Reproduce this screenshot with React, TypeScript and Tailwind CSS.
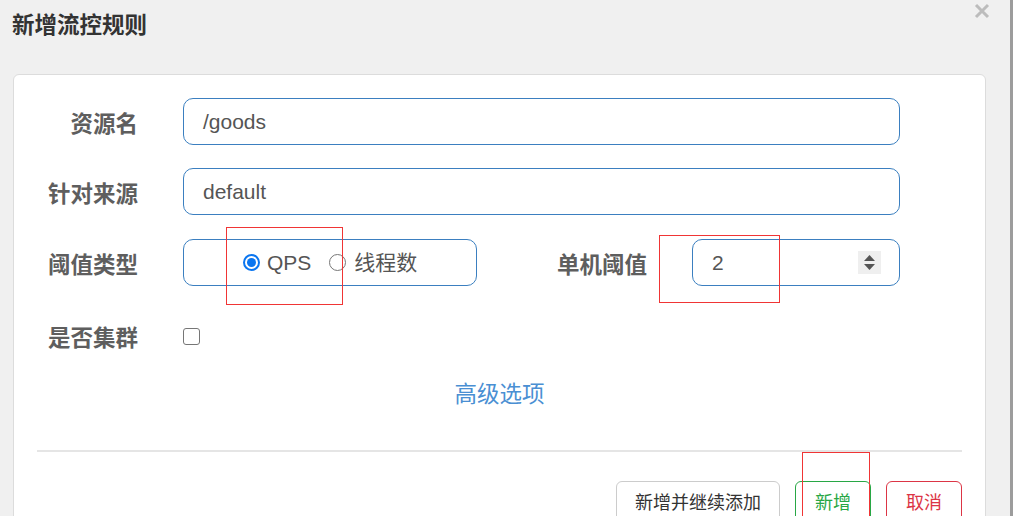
import React from "react";

const font = { fontFamily: '"Liberation Sans", "Noto Sans CJK SC", sans-serif' };

function Radio({ checked, className = "" }: { checked?: boolean; className?: string }) {
  return checked ? (
    <span
      className={`flex h-[17px] w-[17px] shrink-0 items-center justify-center rounded-full border-[2px] border-[#0b76f0] bg-white ${className}`}
    >
      <span className="block h-[9px] w-[9px] rounded-full bg-[#0b76f0]" />
    </span>
  ) : (
    <span
      className={`block h-[17px] w-[17px] shrink-0 rounded-full border-[1.5px] border-[#767676] bg-white ${className}`}
    />
  );
}

function Label({ children, w = "w-[124px]" }: { children: React.ReactNode; w?: string }) {
  return (
    <div className={`${w} shrink-0 pt-[6px] text-right text-[22.5px] font-bold leading-[28px] text-[#5e5e5e]`}>
      {children}
    </div>
  );
}

export default function App() {
  return (
    <div className="relative flex h-[516px] w-[1013px] overflow-hidden bg-[#f0f0f0]" style={font}>
      <div className="flex-1">
        <div className="h-[74px] pl-[12px] pt-[12px] text-[22.5px] font-bold leading-[28px] text-[#333]">
          新增流控规则
        </div>
        <div className="ml-[13px] h-[520px] w-[973px] rounded-[6px] border border-[#dcdcdc] bg-white pt-[23px]">
          <div className="flex h-[47px] items-center">
            <Label>资源名</Label>
            <div className="ml-[45px] flex h-[47px] w-[717px] items-center rounded-[10px] border border-[#3b7fc0] pl-[19px] text-[21px] text-[#555]">
              /goods
            </div>
          </div>
          <div className="mt-[23px] flex h-[47px] items-center">
            <Label>针对来源</Label>
            <div className="ml-[45px] flex h-[47px] w-[717px] items-center rounded-[10px] border border-[#3b7fc0] pl-[19px] text-[21px] text-[#555]">
              default
            </div>
          </div>
          <div className="mt-[24px] flex h-[47px] items-center">
            <Label>阈值类型</Label>
            <div className="ml-[45px] flex h-[47px] w-[294px] items-center rounded-[10px] border border-[#3b7fc0] pl-[59px] text-[21px] text-[#555]">
              <Radio checked />
              <span className="ml-[7px]">QPS</span>
              <Radio className="ml-[18px]" />
              <span className="ml-[8px]">线程数</span>
            </div>
            <Label w="w-[170px]">单机阈值</Label>
            <div className="ml-[45px] flex h-[47px] w-[208px] items-center justify-between rounded-[10px] border border-[#3b7fc0] pl-[19px] pr-[18px] text-[21px] text-[#555]">
              <span>2</span>
              <span className="flex h-[23px] w-[23px] flex-col items-center justify-center gap-[3px] bg-[#efefef]">
                <svg width="11" height="6" viewBox="0 0 11 6">
                  <path d="M5.5 0 L11 6 L0 6 Z" fill="#555" />
                </svg>
                <svg width="11" height="6" viewBox="0 0 11 6">
                  <path d="M0 0 L11 0 L5.5 6 Z" fill="#555" />
                </svg>
              </span>
            </div>
          </div>
          <div className="mt-[24px] flex h-[52px] items-center">
            <Label>是否集群</Label>
            <div className="ml-[45px] h-[17px] w-[17px] rounded-[3px] border-[1.5px] border-[#767676] bg-white" />
          </div>
          <div className="mt-[19px] text-center text-[22.5px] leading-[28px] text-[#4a8fd3]">高级选项</div>
          <div className="mx-[23px] mt-[41px] h-[2px] bg-[#e5e5e5]" />
          <div className="mr-[23px] mt-[29px] flex justify-end gap-[15px]">
            <div className="flex h-[44px] items-center rounded-[6px] border border-[#cccccc] px-[18px] text-[18px] text-[#333]">
              新增并继续添加
            </div>
            <div className="flex h-[44px] items-center rounded-[6px] border border-[#28a745] px-[19px] text-[18px] text-[#28a745]">
              新增
            </div>
            <div className="flex h-[44px] items-center rounded-[6px] border border-[#dc3545] px-[19px] text-[18px] text-[#dc3545]">
              取消
            </div>
          </div>
        </div>
      </div>
      <div className="ml-[24px] w-[3px] bg-[#9c9c9c]" />

      <svg className="absolute left-[974px] top-[3px]" width="16" height="16" viewBox="0 0 16 16">
        <path d="M2 2 L14 14 M14 2 L2 14" stroke="#bcbcbc" strokeWidth="3" />
      </svg>

      <div className="absolute left-[226px] top-[227px] h-[78px] w-[117px] border border-[#f03535]" />
      <div className="absolute left-[659px] top-[235px] h-[68px] w-[121px] border border-[#f03535]" />
      <div className="absolute left-[802px] top-[452px] h-[80px] w-[68px] border border-[#f03535]" />
    </div>
  );
}
